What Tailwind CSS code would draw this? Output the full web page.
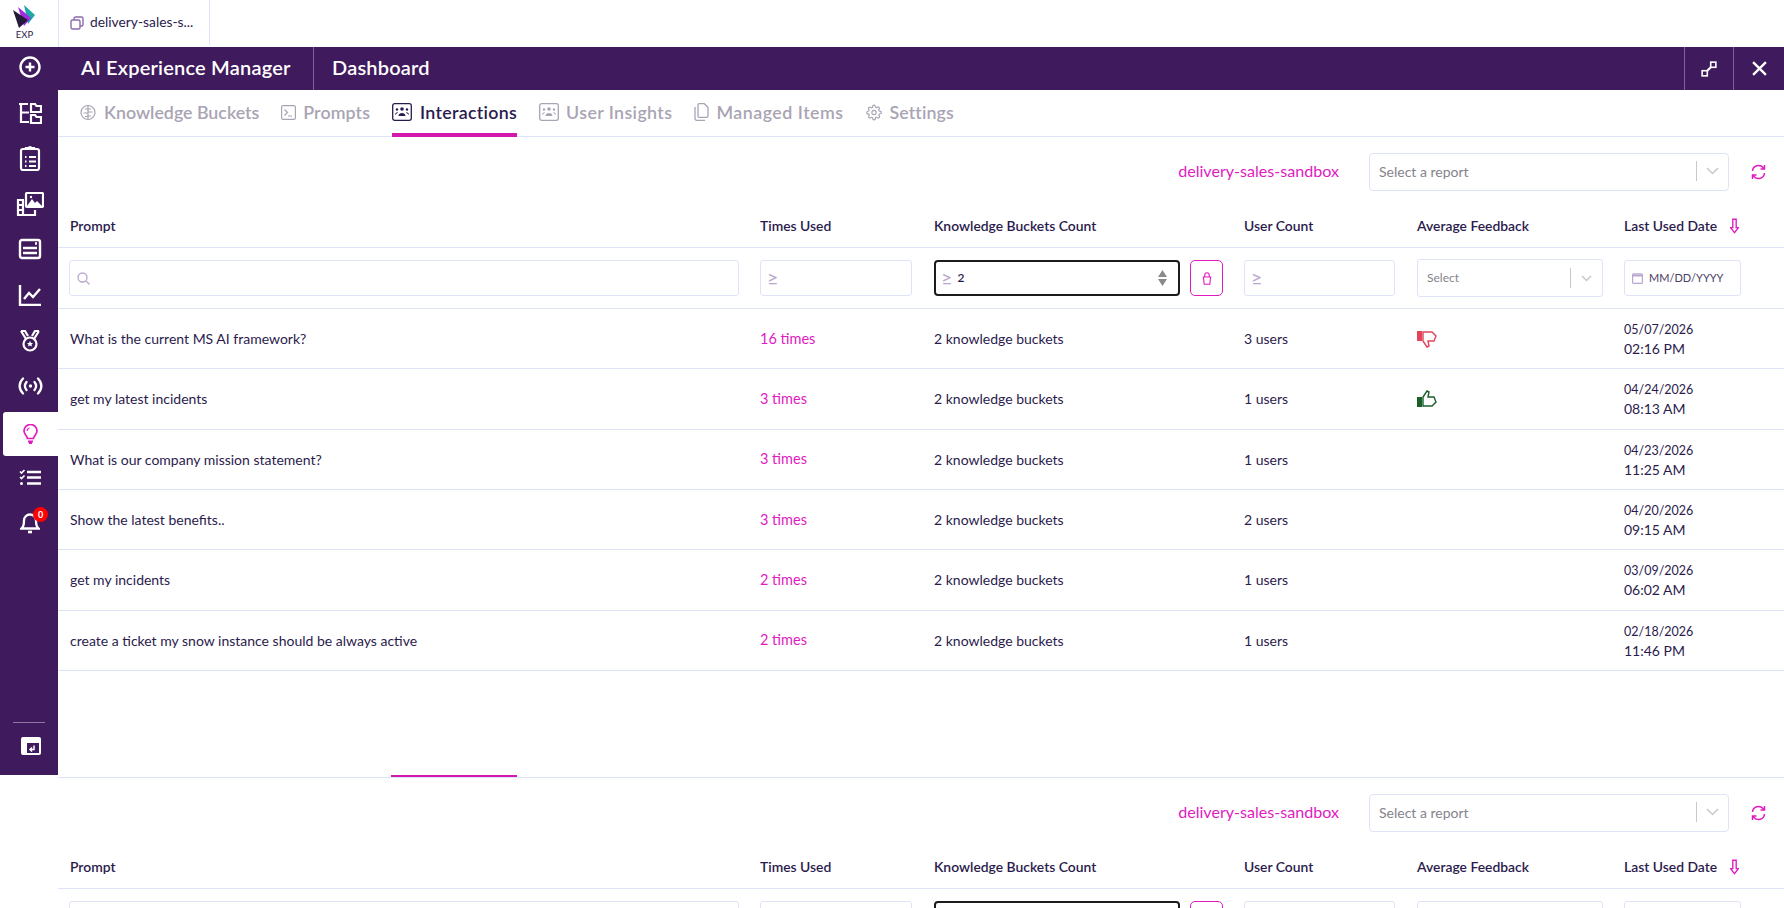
<!DOCTYPE html>
<html lang="en">
  <head>
    <meta charset="UTF-8" />
    <title>AI Experience Manager</title>
    <script src="https://cdn.jsdelivr.net/npm/@tailwindcss/browser@4"></script>
  </head>
  <body class="h-screen overflow-hidden bg-white font-['Lato',sans-serif] text-[14px] text-[#2b1b4d]">
    <!-- Top tab bar -->
    <div class="flex h-[47px]">
      <div class="flex w-[59px] flex-col items-center border-r border-[#dfe3f7] pr-[9px] pt-[5px]">
        <svg class="h-[23px] w-[23px]" viewBox="0 0 23 23">
          <polygon points="11,0 22,10 15,19" fill="#1fa9a5" />
          <polygon points="5,2 18,13 11,21" fill="#a32be0" />
          <polygon points="0,5 15,15 6,23" fill="#241a3a" />
        </svg>
        <span class="mt-[1px] text-[9.500px] leading-[11px] text-[#2b1b4d]">EXP</span>
      </div>
      <div class="flex h-[45px] w-[151px] items-center gap-[6px] border-r border-[#dfe3f7] pl-[11px]">
        <svg class="h-[14px] w-[14px] shrink-0" viewBox="0 0 14 14" fill="none" stroke="#8a6bb0" stroke-width="1.400">
          <rect x="1" y="4" width="9" height="9" rx="1.500" />
          <path d="M4 4V2.500A1.500 1.500 0 0 1 5.500 1h6A1.500 1.500 0 0 1 13 2.500v6a1.500 1.500 0 0 1-1.500 1.500H10" />
        </svg>
        <span class="text-[13.800px]">delivery-sales-s...</span>
      </div>
    </div>

    <div class="flex h-[728px]">
      <!-- Sidebar -->
      <aside class="flex w-[58px] shrink-0 flex-col bg-[#3f1a5c]">
        <nav class="flex flex-col gap-[5.600px] pl-[2px] text-white">
          <a class="flex h-[40px] items-center justify-center">
            <svg class="h-[22px] w-[22px]" viewBox="0 0 22 22" fill="none" stroke="currentColor" stroke-width="2.400"><circle cx="11" cy="11" r="9.500" /><path d="M11 6.500v9M6.500 11h9" /></svg>
          </a>
          <a class="flex h-[40px] items-center justify-center">
            <svg class="h-[22px] w-[24px]" viewBox="0 0 24 22" fill="none" stroke="currentColor" stroke-width="2.200"><path d="M1 2h9M3 2v18h8M3 10.500h8" /><path d="M13 2h4l1.500 2H23v6H13zM13 13h4l1.500 2H23v6H13z" /></svg>
          </a>
          <a class="flex h-[40px] items-center justify-center">
            <svg class="h-[26px] w-[22px]" viewBox="0 0 22 26" fill="none" stroke="currentColor" stroke-width="2.200"><rect x="2" y="4" width="18" height="21" rx="2" /><path d="M7 4V3h3a1 1 0 0 1 2 0h3v1" /><path d="M6 12h1.500M10 12h7M6 16.500h1.500M10 16.500h7M6 21h1.500M10 21h7" /></svg>
          </a>
          <a class="flex h-[40px] items-center justify-center">
            <svg class="h-[24px] w-[28px]" viewBox="0 0 28 24" fill="none" stroke="currentColor" stroke-width="2.200"><rect x="10" y="1" width="17" height="14" rx="1" /><path d="M11 14l5-7 3 4 2-2 5 5z" fill="currentColor" stroke="none" /><circle cx="15" cy="5" r="1.200" fill="currentColor" stroke="none" /><path d="M8 8H2v15h17v-5" /><path d="M2 13h4M2 18h4M7 8v15" /></svg>
          </a>
          <a class="flex h-[40px] items-center justify-center">
            <svg class="h-[22px] w-[24px]" viewBox="0 0 24 22" fill="none" stroke="currentColor" stroke-width="2.400"><rect x="2" y="2" width="20" height="18" rx="2" /><path d="M5 10h14M5 15h14" stroke-width="2.600" /><path d="M17 5.500h2" /></svg>
          </a>
          <a class="flex h-[40px] items-center justify-center">
            <svg class="h-[22px] w-[24px]" viewBox="0 0 24 22" fill="none" stroke="currentColor" stroke-width="2.400"><path d="M2 1v20h21" /><path d="M6 15l5-6 4 4 7-8" /></svg>
          </a>
          <a class="flex h-[40px] items-center justify-center">
            <svg class="h-[22px] w-[20px]" viewBox="0 0 20 22" fill="none" stroke="currentColor" stroke-width="2.200"><path d="M1 1l5 8M19 1l-5 8M1 1h4l3 5M19 1h-4l-3 5" /><circle cx="10" cy="14" r="6.500" /><path d="M10 11l1 2h2l-1.500 1.500.5 2-2-1-2 1 .5-2L7 13h2z" fill="currentColor" stroke="none" /></svg>
          </a>
          <a class="flex h-[40px] items-center justify-center">
            <svg class="h-[18px] w-[25px]" viewBox="0 0 25 18" fill="none" stroke="currentColor" stroke-width="2.300" stroke-linecap="round"><path d="M5 1.500C.500 6 .500 12 5 16.500M20 1.500c4.500 4.500 4.500 10.500 0 15M8.500 5c-2 2.500-2 5.500 0 8M16.500 5c2 2.500 2 5.500 0 8" /><circle cx="12.500" cy="9" r="1.700" fill="currentColor" stroke="none" /></svg>
          </a>
          <a class="mb-[-4px] ml-[1px] flex h-[44px] items-center justify-center rounded-l-[3px] bg-white">
            <svg class="h-[20px] w-[15px]" viewBox="0 0 15 20" fill="none" stroke="#e01bbf" stroke-width="1.700"><path d="M4.500 14.500C4.500 12 1 10.500 1 7a6.500 6.500 0 0 1 13 0c0 3.500-3.500 5-3.500 7.500z" /><path d="M5 17.500h5M6 19.200h3" stroke-width="1.800" /><path d="M4 7a3.500 3.500 0 0 1 2.500-3" stroke-width="1.200" /></svg>
          </a>
          <a class="flex h-[40px] items-center justify-center">
            <svg class="h-[17px] w-[22px]" viewBox="0 0 22 17" fill="none" stroke="currentColor" stroke-width="2.400"><path d="M8 3h14M8 8.500h14M8 14.500h14" /><path d="M1 2.500l1.500 1.500L5.500 1M1 8l1.500 1.500L5.500 6.500" stroke-width="1.700" /><circle cx="2.500" cy="14.500" r="1.500" fill="currentColor" stroke="none" /></svg>
          </a>
          <a class="relative flex h-[40px] items-center justify-center">
            <svg class="h-[23px] w-[20px]" viewBox="0 0 20 23" fill="none" stroke="currentColor" stroke-width="2.300"><path d="M1.500 17.500c2.500-2 2.500-5 2.500-8a6 6 0 0 1 12 0c0 3 0 6 2.500 8z" /><path d="M8 21h4" stroke-width="2.600" /></svg>
            <span class="absolute left-[31px] top-[4px] flex h-[15px] w-[15px] items-center justify-center rounded-full bg-[#f00] text-[9px] font-bold text-white">0</span>
          </a>
        </nav>
        <div class="mx-[13px] mt-auto h-px bg-[#8f77a5]"></div>
        <a class="mb-[20px] mt-[14px] flex justify-center pl-[4px]">
          <svg class="h-[18px] w-[20px]" viewBox="0 0 20 18"><rect width="20" height="18" rx="2" fill="#fff" /><rect x="6" y="6" width="12" height="10" fill="#3f1a5c" /><path d="M13 8.500v4H9M11 10.500l-2 2 2 2" fill="none" stroke="#fff" stroke-width="1.500" /></svg>
        </a>
      </aside>

      <main class="min-w-0 flex-1 overflow-hidden">
        <!-- Title bar -->
        <header class="flex h-[43px] items-center bg-[#3f1a5c] text-white">
          <div class="flex h-full w-[256px] items-center border-r border-[#7d6292] pb-[3px] pl-[23px] text-[20px] font-semibold tracking-[0.200px]">AI Experience Manager</div>
          <div class="pb-[3px] pl-[18px] text-[20px] font-semibold tracking-[0.200px]">Dashboard</div>
          <div class="ml-auto flex h-full w-[50px] items-center justify-center border-x border-[#7d6292]">
            <svg class="h-[16px] w-[16px]" viewBox="0 0 14 14" fill="none" stroke="#fff" stroke-width="1.400"><rect x="8.500" y="1" width="4.500" height="4.500" /><rect x="1" y="8.500" width="4.500" height="4.500" /><path d="M5.500 8.500l3-3" stroke-width="1.800" /></svg>
          </div>
          <div class="flex h-full w-[50px] items-center justify-center">
            <svg class="h-[15px] w-[15px]" viewBox="0 0 14 14" fill="none" stroke="#fff" stroke-width="2.200"><path d="M1 1l12 12M13 1L1 13" /></svg>
          </div>
        </header>

        <!-- Tabs -->
        <div class="flex h-[47px] items-stretch gap-[22px] border-b border-[#dfe3f7] pl-[22px] text-[17.800px] font-semibold text-[#a9a4b4]">
          <a class="flex items-center gap-[8px] pb-[2px]">
            <svg class="h-[17px] w-[16px]" viewBox="0 0 16 17" fill="none" stroke="currentColor" stroke-width="1.200"><circle cx="8" cy="8.500" r="7" /><path d="M8 2v13M5 5h3M3.500 9H8M5 12.500h3M11 5H8M12.500 8H8M11 12H8" /></svg>
            Knowledge Buckets
          </a>
          <a class="flex items-center gap-[7px] pb-[2px] tracking-[0.100px]">
            <svg class="h-[15px] w-[15px]" viewBox="0 0 15 15" fill="none" stroke="currentColor" stroke-width="1.200"><rect x="0.600" y="0.600" width="13.800" height="13.800" rx="1.500" /><path d="M3.500 4.500l3 3-3 3M7 11h4" /></svg>
            Prompts
          </a>
          <a class="relative flex items-center gap-[8px] pb-[2px] tracking-[0.300px] text-[#2b1b4d] after:absolute after:inset-x-0 after:bottom-[-1px] after:h-[4px] after:bg-[#d418ad]">
            <svg class="h-[18px] w-[20px]" viewBox="0 0 20 18" fill="none" stroke="currentColor" stroke-width="1.300"><rect x="0.700" y="0.700" width="18.600" height="16.600" rx="2" /><circle cx="10" cy="6" r="1.800" fill="currentColor" stroke="none" /><circle cx="5" cy="6.500" r="1.200" fill="currentColor" stroke="none" /><circle cx="15" cy="6.500" r="1.200" fill="currentColor" stroke="none" /><path d="M6.500 13c0-4 7-4 7 0zM3 12c0-2 2-3 3-2.500M17 12c0-2-2-3-3-2.500" fill="currentColor" stroke="none" /></svg>
            Interactions
          </a>
          <a class="flex items-center gap-[7px] pb-[2px] tracking-[0.400px]">
            <svg class="h-[18px] w-[20px]" viewBox="0 0 20 18" fill="none" stroke="currentColor" stroke-width="1.300"><rect x="0.700" y="0.700" width="18.600" height="16.600" rx="2" /><circle cx="10" cy="6" r="1.800" fill="currentColor" stroke="none" /><circle cx="5" cy="6.500" r="1.200" fill="currentColor" stroke="none" /><circle cx="15" cy="6.500" r="1.200" fill="currentColor" stroke="none" /><path d="M6.500 13c0-4 7-4 7 0zM3 12c0-2 2-3 3-2.500M17 12c0-2-2-3-3-2.500" fill="currentColor" stroke="none" /></svg>
            User Insights
          </a>
          <a class="flex items-center gap-[7px] pb-[2px] tracking-[0.500px]">
            <svg class="h-[18px] w-[15px]" viewBox="0 0 15 18" fill="none" stroke="currentColor" stroke-width="1.300"><path d="M1 4v11.500A2 2 0 0 0 3 17.400h8" /><path d="M4 2a1.300 1.300 0 0 1 1.300-1.300h5L14 4.500v8.500a1.300 1.300 0 0 1-1.300 1.300H5.300A1.300 1.300 0 0 1 4 13z" /></svg>
            Managed Items
          </a>
          <a class="flex items-center gap-[8px] pb-[2px] tracking-[0.100px]">
            <svg class="h-[17px] w-[16px]" viewBox="0 0 24 24" fill="none" stroke="currentColor" stroke-width="1.800"><circle cx="12" cy="12" r="3.200" /><path d="M19.400 15a1.650 1.650 0 0 0 .33 1.820l.06.06a2 2 0 1 1-2.830 2.830l-.06-.06a1.650 1.650 0 0 0-2.800 1.170V21a2 2 0 0 1-4 0v-.09a1.650 1.650 0 0 0-2.800-1.170l-.06.06a2 2 0 1 1-2.830-2.830l.06-.06a1.650 1.650 0 0 0-1.170-2.800H3a2 2 0 0 1 0-4h.09a1.650 1.650 0 0 0 1.170-2.800l-.06-.06a2 2 0 1 1 2.830-2.830l.06.06a1.650 1.650 0 0 0 2.800-1.170V3a2 2 0 0 1 4 0v.09a1.650 1.650 0 0 0 2.800 1.170l.06-.06a2 2 0 1 1 2.830 2.830l-.06.06a1.650 1.650 0 0 0 1.170 2.800H21a2 2 0 0 1 0 4h-.09a1.650 1.650 0 0 0-1.510 1z" /></svg>
            Settings
          </a>
        </div>

        <div data-toolbar></div>
        <div data-head></div>

        <!-- Filter row -->
        <div class="grid h-[61px] grid-cols-[691px_174px_310px_173px_207px_1fr] items-center border-b border-[#dfe3f7] pl-[11px]">
          <div class="flex h-[36px] w-[670px] items-center rounded-[3px] border border-[#dfe3f7] pl-[7px]">
            <svg class="h-[13px] w-[13px]" viewBox="0 0 13 13" fill="none" stroke="#b9a7cf" stroke-width="1.300"><circle cx="5.500" cy="5.500" r="4.500" /><path d="M9 9l3.500 3.500" /></svg>
          </div>
          <div class="flex h-[36px] w-[152px] items-center rounded-[3px] border border-[#dfe3f7] pb-[2px] pl-[6px] text-[20px] leading-none text-[#b9a7cf]">≥</div>
          <div class="flex items-center gap-[10px]">
            <div class="flex h-[36px] w-[246px] items-center rounded-[4px] border-2 border-[#1c1c1c] pl-[5px]">
              <span class="pb-[2px] text-[20px] leading-none text-[#b9a7cf]">≥</span>
              <span class="ml-[5px] text-[12px] font-semibold">2</span>
              <svg class="ml-auto mr-[11px] h-[16px] w-[9px]" viewBox="0 0 9 16" fill="#8a8a8a"><path d="M4.500 0L9 7H0zM4.500 16L0 9h9z" /></svg>
            </div>
            <div class="flex h-[36px] w-[33px] items-center justify-center rounded-[5px] border border-[#e01bbf]">
              <svg class="h-[13px] w-[10px]" viewBox="0 0 10 13" fill="none" stroke="#e01bbf" stroke-width="1.100"><path d="M2.800 5V3a2.200 2.200 0 0 1 4.400 0v2M.7 5h8.600M1.400 5l.8 7.300h5.600L8.600 5" /></svg>
            </div>
          </div>
          <div class="flex h-[36px] w-[151px] items-center rounded-[3px] border border-[#dfe3f7] pb-[2px] pl-[6px] text-[20px] leading-none text-[#b9a7cf]">≥</div>
          <div class="flex h-[38px] w-[186px] items-center rounded-[3px] border border-[#dfe3f7] pl-[9px] text-[12px] text-[#85838c]">
            <span>Select</span>
            <span class="ml-auto h-[20px] w-px bg-[#c8c8cc]"></span>
            <svg class="mx-[10px] h-[7px] w-[11px]" viewBox="0 0 11 7" fill="none" stroke="#c8c8cc" stroke-width="1.500"><path d="M1 1l4.500 4.500L10 1" /></svg>
          </div>
          <div class="flex h-[36px] w-[117px] items-center gap-[6px] rounded-[3px] border border-[#dfe3f7] pl-[7px] text-[11px] text-[#4a3d63]">
            <svg class="h-[12px] w-[11px]" viewBox="0 0 11 12" fill="none" stroke="#b9a7cf" stroke-width="1.200"><rect x="0.600" y="1.800" width="9.800" height="9.600" rx="1" /><path d="M0.600 3.500h9.800" stroke-width="2" /></svg>
            MM/DD/YYYY
          </div>
        </div>

        <div id="rows"></div>
      </main>
    </div>

    <!-- Repeated panel below the sidebar -->
    <div class="pl-[58px]">
      <div class="h-[3px] border-b border-[#dfe3f7] pl-[333px]"><div class="h-[2px] w-[126px] bg-[#d418ad]"></div></div>
      <div data-toolbar></div>
      <div data-head></div>
      <!-- only the top edge of the filter boxes is in view here -->
      <div class="grid grid-cols-[691px_174px_310px_173px_207px_1fr] pl-[11px] pt-[12px]">
        <div class="h-[36px] w-[670px] rounded-[3px] border border-[#dfe3f7]"></div>
        <div class="h-[36px] w-[152px] rounded-[3px] border border-[#dfe3f7]"></div>
        <div class="flex gap-[10px]">
          <div class="h-[36px] w-[246px] rounded-[4px] border-2 border-[#1c1c1c]"></div>
          <div class="h-[36px] w-[33px] rounded-[5px] border border-[#e01bbf]"></div>
        </div>
        <div class="h-[36px] w-[151px] rounded-[3px] border border-[#dfe3f7]"></div>
        <div class="h-[38px] w-[186px] rounded-[3px] border border-[#dfe3f7]"></div>
        <div class="h-[36px] w-[117px] rounded-[3px] border border-[#dfe3f7]"></div>
      </div>
    </div>

    <template id="toolbarTpl">
      <div class="flex h-[54px] items-end justify-end pr-[18px]">
        <span class="mb-[8px] mr-[30px] text-[16.100px] text-[#e01bbf]">delivery-sales-sandbox</span>
        <div class="flex h-[38px] w-[360px] items-center rounded-[4px] border border-[#dfe3f7] pb-[2px] pl-[9px] text-[#85838c]">
          <span>Select a report</span>
          <span class="ml-auto h-[20px] w-px bg-[#c8c8cc]"></span>
          <svg class="mx-[9px] h-[8px] w-[13px]" viewBox="0 0 13 8" fill="none" stroke="#c8c8cc" stroke-width="1.500"><path d="M1 1l5.500 5.500L12 1" /></svg>
        </div>
        <svg class="mb-[11px] ml-[22px] h-[16px] w-[15px]" viewBox="0 0 15 16" fill="none" stroke="#e01bbf" stroke-width="1.500"><path d="M1.500 7A6 6 0 0 1 12 3.500L13.500 5M13.500 1v4h-4M13.500 9A6 6 0 0 1 3 12.500L1.500 11M1.500 15v-4h4" /></svg>
      </div>
    </template>

    <template id="headTpl">
      <div class="grid h-[57px] grid-cols-[690px_174px_310px_173px_207px_1fr] items-center border-b border-[#dfe3f7] pl-[12px] pt-[15px] text-[13.900px] font-semibold">
        <div>Prompt</div>
        <div>Times Used</div>
        <div>Knowledge Buckets Count</div>
        <div>User Count</div>
        <div>Average Feedback</div>
        <div class="flex items-center gap-[13px]">
          Last Used Date
          <svg class="h-[16px] w-[9px]" viewBox="0 0 8 14" fill="none" stroke="#e01bbf" stroke-width="1.200"><path d="M2.500 1h3v7.500H7.500L4 13 .5 8.500h2z" /></svg>
        </div>
      </div>
    </template>

    <script>
      // Rows of the interactions table
      const interactions = [
        { prompt: "What is the current MS AI framework?", times: 16, users: 3, date: "05/07/2026", time: "02:16 PM", feedback: "down" },
        { prompt: "get my latest incidents", times: 3, users: 1, date: "04/24/2026", time: "08:13 AM", feedback: "up" },
        { prompt: "What is our company mission statement?", times: 3, users: 1, date: "04/23/2026", time: "11:25 AM" },
        { prompt: "Show the latest benefits..", times: 3, users: 2, date: "04/20/2026", time: "09:15 AM" },
        { prompt: "get my incidents", times: 2, users: 1, date: "03/09/2026", time: "06:02 AM" },
        { prompt: "create a ticket my snow instance should be always active", times: 2, users: 1, date: "02/18/2026", time: "11:46 PM" },
      ];

      const thumbs = {
        down: `<svg class="h-[18px] w-[20px]" viewBox="0 0 20 18"><rect x="0" y="1" width="5" height="10" fill="#e0455a" /><path d="M6 2h9l4 4-2 5h-6l1 5-2 1-4-6z" fill="none" stroke="#e0455a" stroke-width="1.400" /></svg>`,
        up: `<svg class="h-[18px] w-[20px]" viewBox="0 0 20 18"><rect x="0" y="7" width="5" height="10" fill="#1a5f2a" /><path d="M6 16h9l4-4-2-5h-6l1-5-2-1-4 6z" fill="none" stroke="#1a5f2a" stroke-width="1.400" /></svg>`,
      };

      document.querySelectorAll("[data-toolbar]").forEach((el) => {
        el.innerHTML = document.getElementById("toolbarTpl").innerHTML;
      });
      document.querySelectorAll("[data-head]").forEach((el) => {
        el.innerHTML = document.getElementById("headTpl").innerHTML;
      });

      document.getElementById("rows").innerHTML = interactions
        .map(
          (row) => `
        <div class="grid h-[60.330px] grid-cols-[690px_174px_310px_173px_207px_1fr] items-center border-b border-[#dfe3f7] pl-[12px]">
          <div>${row.prompt}</div>
          <div class="text-[14.500px] text-[#e01bbf]">${row.times} times</div>
          <div>2 knowledge buckets</div>
          <div>${row.users} users</div>
          <div>${row.feedback ? thumbs[row.feedback] : ""}</div>
          <div class="leading-[19px]"><span class="text-[12.500px]">${row.date}</span><br />${row.time}</div>
        </div>`
        )
        .join("");
    </script>
  </body>
</html>
